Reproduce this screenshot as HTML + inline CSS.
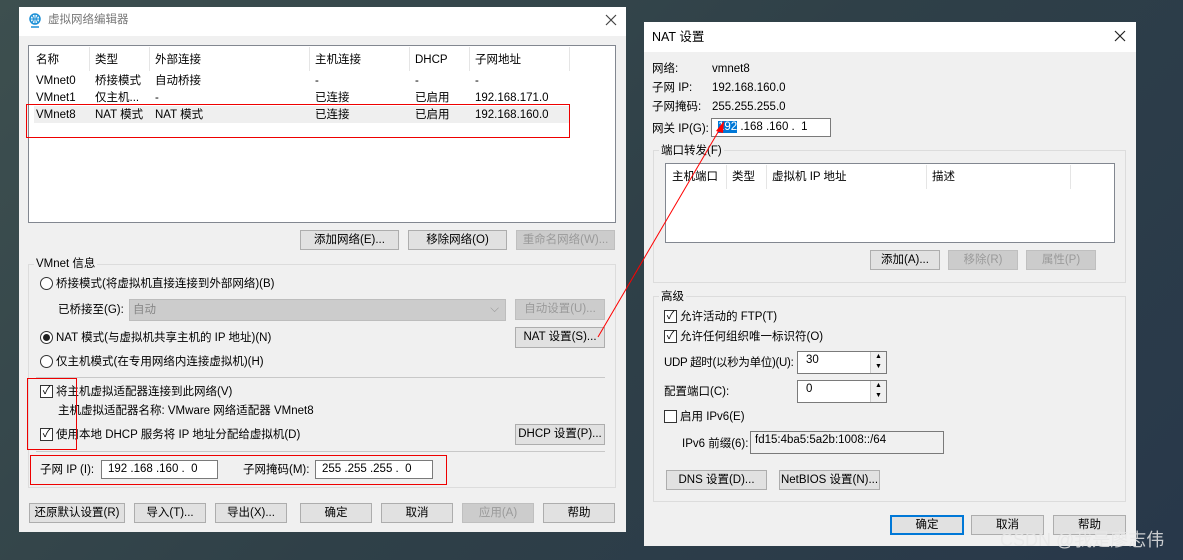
<!DOCTYPE html>
<html><head><meta charset="utf-8"><style>
*{margin:0;padding:0;box-sizing:border-box}
body{width:1183px;height:560px;overflow:hidden;position:relative;background:linear-gradient(135deg,#3d4f4f 0%,#2f4048 50%,#28384a 100%);font-family:"Liberation Sans","Noto Sans CJK SC",sans-serif;font-size:11.5px;line-height:14px;color:#000}
.a{position:absolute;white-space:nowrap}
.dlg{position:absolute;background:#f0f0f0}
.tb{position:absolute;left:0;right:0;top:0;background:#fff}
.btn{position:absolute;background:#e1e1e1;border:1px solid #adadad;text-align:center;line-height:18px;white-space:nowrap;overflow:hidden}
.dis{color:#9a9a9a;background:#cccccc;border-color:#bfbfbf}
.box{position:absolute;background:#fff;border:1px solid #828790}
.inp{position:absolute;background:#fff;border:1px solid #7a7a7a;line-height:16px;padding-left:6px;white-space:nowrap}
.grp{position:absolute;border:1px solid #dcdcdc}
.gl{position:absolute;background:#f0f0f0;padding:0 2px;white-space:nowrap}
.rad{position:absolute;width:13px;height:13px;border:1px solid #333;border-radius:50%;background:#fff}
.chk{position:absolute;width:13px;height:13px;border:1px solid #333;background:#fff;font-size:11px;line-height:11px;text-align:center}
.red{position:absolute;border:1px solid #e00}
.sep{position:absolute;height:1px;background:#c8c8c8}
.hd{position:absolute;width:1px;background:#e5e5e5}
</style></head><body>

<div class="dlg" style="left:19px;top:7px;width:607px;height:525px"><div class="tb" style="height:29px"></div></div>
<svg class="a" style="left:28px;top:13px" width="14" height="16" viewBox="0 0 14 16"><circle cx="7" cy="6" r="5" fill="none" stroke="#1a8fd6" stroke-width="1.5"/><path d="M2 6h10M7 1v10M4 2.5q3 3.5 0 7M10 2.5q-3 3.5 0 7" stroke="#1a8fd6" fill="none"/><path d="M3 14h8" stroke="#1a8fd6" stroke-width="1.5"/></svg>
<div class="a" style="left:48px;top:13px;color:#777">虚拟网络编辑器</div>
<svg class="a" style="left:605px;top:14px" width="12" height="12"><path d="M1 1L11 11M11 1L1 11" stroke="#444" stroke-width="1.2"/></svg>

<div class="box" style="left:28px;top:45px;width:588px;height:178px"></div>
<div class="hd" style="left:89px;top:47px;height:24px"></div><div class="hd" style="left:149px;top:47px;height:24px"></div><div class="hd" style="left:309px;top:47px;height:24px"></div><div class="hd" style="left:409px;top:47px;height:24px"></div><div class="hd" style="left:469px;top:47px;height:24px"></div><div class="hd" style="left:569px;top:47px;height:24px"></div>
<div class="a" style="left:34px;top:106px;width:535px;height:17px;background:#efefef"></div>
<div class="a" style="left:36px;top:53px">名称</div><div class="a" style="left:95px;top:53px">类型</div><div class="a" style="left:155px;top:53px">外部连接</div><div class="a" style="left:315px;top:53px">主机连接</div><div class="a" style="left:415px;top:53px">DHCP</div><div class="a" style="left:475px;top:53px">子网地址</div>
<div class="a" style="left:36px;top:74px">VMnet0</div><div class="a" style="left:95px;top:74px">桥接模式</div><div class="a" style="left:155px;top:74px">自动桥接</div><div class="a" style="left:315px;top:74px">-</div><div class="a" style="left:415px;top:74px">-</div><div class="a" style="left:475px;top:74px">-</div>
<div class="a" style="left:36px;top:91px">VMnet1</div><div class="a" style="left:95px;top:91px">仅主机...</div><div class="a" style="left:155px;top:91px">-</div><div class="a" style="left:315px;top:91px">已连接</div><div class="a" style="left:415px;top:91px">已启用</div><div class="a" style="left:475px;top:91px">192.168.171.0</div>
<div class="a" style="left:36px;top:108px">VMnet8</div><div class="a" style="left:95px;top:108px">NAT 模式</div><div class="a" style="left:155px;top:108px">NAT 模式</div><div class="a" style="left:315px;top:108px">已连接</div><div class="a" style="left:415px;top:108px">已启用</div><div class="a" style="left:475px;top:108px">192.168.160.0</div>
<div class="red" style="left:26px;top:104px;width:544px;height:34px"></div>

<div class="btn" style="left:300px;top:230px;width:99px;height:20px">添加网络(E)...</div>
<div class="btn" style="left:408px;top:230px;width:99px;height:20px">移除网络(O)</div>
<div class="btn dis" style="left:516px;top:230px;width:99px;height:20px">重命名网络(W)...</div>

<div class="grp" style="left:28px;top:264px;width:588px;height:224px"></div>
<div class="gl" style="left:34px;top:257px">VMnet 信息</div>
<div class="rad" style="left:40px;top:277px"></div><div class="a" style="left:56px;top:277px">桥接模式(将虚拟机直接连接到外部网络)(B)</div>
<div class="a" style="left:58px;top:303px">已桥接至(G):</div>
<div class="a" style="left:129px;top:299px;width:377px;height:22px;background:#ccc;border:1px solid #bdbdbd;color:#888;padding:3px 3px">自动<span style="position:absolute;right:6px;top:2px;color:#999">⌵</span></div>
<div class="btn dis" style="left:515px;top:299px;width:90px;height:21px">自动设置(U)...</div>
<div class="rad" style="left:40px;top:331px"><div style="position:absolute;left:2px;top:2px;width:7px;height:7px;border-radius:50%;background:#222"></div></div><div class="a" style="left:56px;top:331px">NAT 模式(与虚拟机共享主机的 IP 地址)(N)</div>
<div class="btn" style="left:515px;top:327px;width:90px;height:21px">NAT 设置(S)...</div>
<div class="rad" style="left:40px;top:355px"></div><div class="a" style="left:56px;top:355px">仅主机模式(在专用网络内连接虚拟机)(H)</div>
<div class="sep" style="left:36px;top:377px;width:569px"></div>
<div class="chk" style="left:40px;top:385px">✓</div><div class="a" style="left:56px;top:385px">将主机虚拟适配器连接到此网络(V)</div>
<div class="a" style="left:58px;top:404px">主机虚拟适配器名称: VMware 网络适配器 VMnet8</div>
<div class="chk" style="left:40px;top:428px">✓</div><div class="a" style="left:56px;top:428px">使用本地 DHCP 服务将 IP 地址分配给虚拟机(D)</div>
<div class="btn" style="left:515px;top:424px;width:90px;height:21px">DHCP 设置(P)...</div>
<div class="red" style="left:27px;top:378px;width:50px;height:72px"></div>
<div class="sep" style="left:36px;top:451px;width:569px"></div>
<div class="a" style="left:40px;top:463px">子网 IP (I):</div>
<div class="inp" style="left:101px;top:460px;width:117px;height:19px">192 .168 .160 .&nbsp; 0</div>
<div class="a" style="left:243px;top:463px">子网掩码(M):</div>
<div class="inp" style="left:315px;top:460px;width:118px;height:19px">255 .255 .255 .&nbsp; 0</div>
<div class="red" style="left:30px;top:455px;width:417px;height:30px"></div>

<div class="btn" style="left:29px;top:503px;width:96px;height:20px">还原默认设置(R)</div>
<div class="btn" style="left:134px;top:503px;width:72px;height:20px">导入(T)...</div>
<div class="btn" style="left:215px;top:503px;width:72px;height:20px">导出(X)...</div>
<div class="btn" style="left:300px;top:503px;width:72px;height:20px">确定</div>
<div class="btn" style="left:381px;top:503px;width:72px;height:20px">取消</div>
<div class="btn dis" style="left:462px;top:503px;width:72px;height:20px">应用(A)</div>
<div class="btn" style="left:543px;top:503px;width:72px;height:20px">帮助</div>

<div class="dlg" style="left:644px;top:22px;width:492px;height:524px"><div class="tb" style="height:30px"></div></div>
<div class="a" style="left:652px;top:30px;font-size:12.5px">NAT 设置</div>
<svg class="a" style="left:1114px;top:30px" width="12" height="12"><path d="M1 1L11 11M11 1L1 11" stroke="#222" stroke-width="1.2"/></svg>
<div class="a" style="left:652px;top:62px">网络:</div><div class="a" style="left:712px;top:62px">vmnet8</div>
<div class="a" style="left:652px;top:81px">子网 IP:</div><div class="a" style="left:712px;top:81px">192.168.160.0</div>
<div class="a" style="left:652px;top:100px">子网掩码:</div><div class="a" style="left:712px;top:100px">255.255.255.0</div>
<div class="a" style="left:652px;top:122px">网关 IP(G):</div>
<div class="inp" style="left:711px;top:118px;width:120px;height:19px"><span style="background:#0078d7;color:#fff">192</span> .168 .160 .&nbsp; 1</div>

<div class="grp" style="left:653px;top:150px;width:473px;height:133px"></div>
<div class="gl" style="left:659px;top:144px">端口转发(F)</div>
<div class="box" style="left:665px;top:163px;width:450px;height:80px"></div>
<div class="hd" style="left:726px;top:165px;height:24px"></div><div class="hd" style="left:766px;top:165px;height:24px"></div><div class="hd" style="left:926px;top:165px;height:24px"></div><div class="hd" style="left:1070px;top:165px;height:24px"></div>
<div class="a" style="left:672px;top:170px">主机端口</div><div class="a" style="left:732px;top:170px">类型</div><div class="a" style="left:772px;top:170px">虚拟机 IP 地址</div><div class="a" style="left:932px;top:170px">描述</div>
<div class="btn" style="left:870px;top:250px;width:70px;height:20px">添加(A)...</div>
<div class="btn dis" style="left:948px;top:250px;width:70px;height:20px">移除(R)</div>
<div class="btn dis" style="left:1026px;top:250px;width:70px;height:20px">属性(P)</div>

<div class="grp" style="left:653px;top:296px;width:473px;height:206px"></div>
<div class="gl" style="left:659px;top:290px">高级</div>
<div class="chk" style="left:664px;top:310px">✓</div><div class="a" style="left:680px;top:310px">允许活动的 FTP(T)</div>
<div class="chk" style="left:664px;top:330px">✓</div><div class="a" style="left:680px;top:330px">允许任何组织唯一标识符(O)</div>
<div class="a" style="left:664px;top:356px;letter-spacing:-0.3px">UDP 超时(以秒为单位)(U):</div>
<div class="inp" style="left:797px;top:351px;width:90px;height:23px;padding-left:8px">30</div>
<div class="a" style="left:870px;top:352px;width:16px;height:21px;background:#f0f0f0;border-left:1px solid #ccc;font-size:7px;line-height:10px;text-align:center">▲<br>▼</div>
<div class="a" style="left:664px;top:385px">配置端口(C):</div>
<div class="inp" style="left:797px;top:380px;width:90px;height:23px;padding-left:8px">0</div>
<div class="a" style="left:870px;top:381px;width:16px;height:21px;background:#f0f0f0;border-left:1px solid #ccc;font-size:7px;line-height:10px;text-align:center">▲<br>▼</div>
<div class="chk" style="left:664px;top:410px"></div><div class="a" style="left:680px;top:410px">启用 IPv6(E)</div>
<div class="a" style="left:682px;top:437px">IPv6 前缀(6):</div>
<div class="inp" style="left:750px;top:431px;width:194px;height:23px;background:#f0f0f0;padding-left:4px">fd15:4ba5:5a2b:1008::/64</div>
<div class="btn" style="left:666px;top:470px;width:101px;height:20px">DNS 设置(D)...</div>
<div class="btn" style="left:779px;top:470px;width:101px;height:20px">NetBIOS 设置(N)...</div>

<div class="btn" style="left:890px;top:515px;width:74px;height:20px;border:2px solid #0078d7;line-height:16px">确定</div>
<div class="btn" style="left:971px;top:515px;width:73px;height:20px">取消</div>
<div class="btn" style="left:1053px;top:515px;width:73px;height:20px">帮助</div>

<div class="a" style="left:1000px;top:530px;font-size:18px;line-height:20px;color:rgba(230,230,230,0.85)">CSDN @我是廖志伟</div>

<svg class="a" style="left:0;top:0" width="1183" height="560"><line x1="598" y1="337" x2="721" y2="127" stroke="#f00" stroke-width="1"/><polygon points="724,121 716,131 723,133" fill="#f00"/></svg>
</body></html>
